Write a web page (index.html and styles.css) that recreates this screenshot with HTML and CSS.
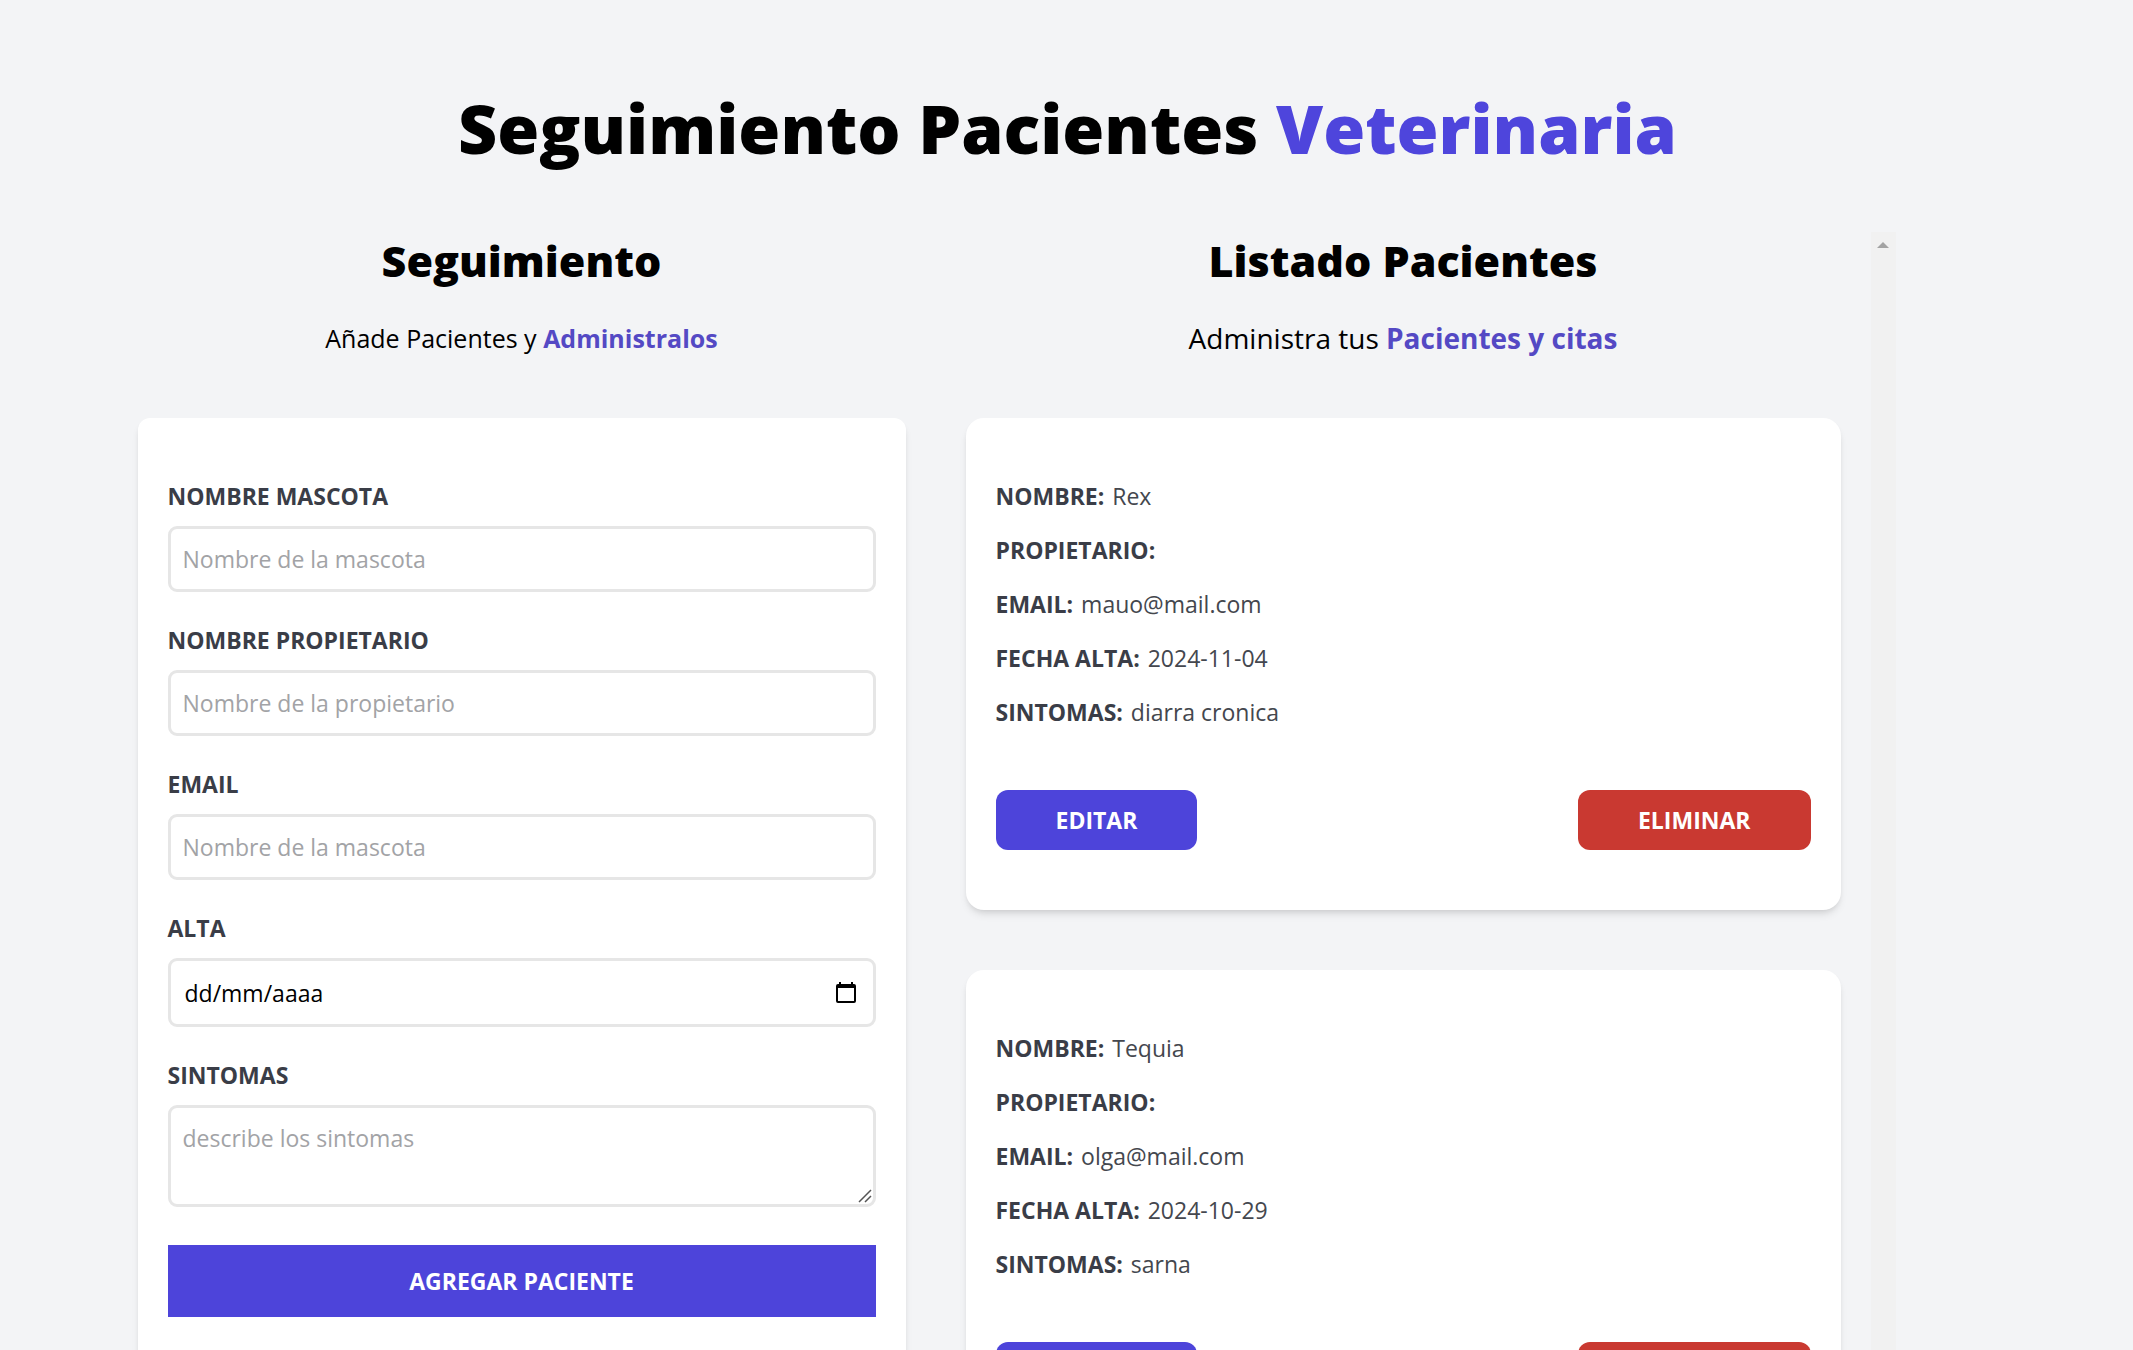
FILE: index.html
```html
<!DOCTYPE html>
<html lang="es">
<head>
  <meta charset="utf-8">
  <meta name="viewport" content="width=device-width, initial-scale=1">
  <title>Seguimiento Pacientes Veterinaria</title>
  <link rel="stylesheet" href="styles.css">
</head>
<body>
  <div class="container">
    <header>
      <h1 class="title">Seguimiento Pacientes <span class="accent">Veterinaria</span></h1>
    </header>
    <main class="columns">
      <section class="form-column">
        <h2 class="heading">Seguimiento</h2>
        <p class="intro">Añade Pacientes y <strong class="intro-accent">Administralos</strong></p>
        <form class="form">
          <div class="field">
            <label class="label" for="mascota">Nombre Mascota</label>
            <input class="control" id="mascota" type="text" placeholder="Nombre de la mascota">
          </div>
          <div class="field">
            <label class="label" for="propietario">Nombre Propietario</label>
            <input class="control" id="propietario" type="text" placeholder="Nombre de la propietario">
          </div>
          <div class="field">
            <label class="label" for="email">Email</label>
            <input class="control" id="email" type="email" placeholder="Nombre de la mascota">
          </div>
          <div class="field">
            <label class="label" for="alta">Alta</label>
            <div class="control date">
              <input class="date-input" id="alta" type="text" inputmode="numeric" placeholder="dd/mm/aaaa">
              <button class="date-button" type="button" aria-label="Abrir calendario">
                <svg class="date-icon" viewBox="0 0 20 22" aria-hidden="true"><path fill-rule="evenodd" d="M3 0h2v2h10V0h2v2h1a2 2 0 0 1 2 2v15a2 2 0 0 1-2 2H2a2 2 0 0 1-2-2V4a2 2 0 0 1 2-2h1zM2 6v13h16V6z"/></svg>
              </button>
            </div>
          </div>
          <div class="field field-last">
            <label class="label" for="sintomas">Sintomas</label>
            <textarea class="control area" id="sintomas" rows="2" placeholder="describe los sintomas"></textarea>
          </div>
          <button class="submit" type="submit">Agregar Paciente</button>
        </form>
      </section>
      <section class="list-column">
        <div class="list">
          <h2 class="heading">Listado Pacientes</h2>
          <p class="intro intro-large">Administra tus <strong class="intro-accent">Pacientes y citas</strong></p>
          <article class="card">
            <p class="row"><b class="key">Nombre:</b> Rex</p>
            <p class="row"><b class="key">Propietario:</b></p>
            <p class="row"><b class="key">Email:</b> mauo@mail.com</p>
            <p class="row"><b class="key">Fecha Alta:</b> 2024-11-04</p>
            <p class="row"><b class="key">Sintomas:</b> diarra cronica</p>
            <div class="actions">
              <button class="action" type="button">Editar</button>
              <button class="action action-delete" type="button">Eliminar</button>
            </div>
          </article>
          <article class="card">
            <p class="row"><b class="key">Nombre:</b> Tequia</p>
            <p class="row"><b class="key">Propietario:</b></p>
            <p class="row"><b class="key">Email:</b> olga@mail.com</p>
            <p class="row"><b class="key">Fecha Alta:</b> 2024-10-29</p>
            <p class="row"><b class="key">Sintomas:</b> sarna</p>
            <div class="actions">
              <button class="action" type="button">Editar</button>
              <button class="action action-delete" type="button">Eliminar</button>
            </div>
          </article>
        </div>
        <div class="track" aria-hidden="true"><span class="track-arrow"></span></div>
      </section>
    </main>
  </div>
</body>
</html>
```
FILE: styles.css
```css
* {
  box-sizing: border-box;
}

html {
  overflow-x: hidden;
  scrollbar-width: none;
}

body {
  margin: 0;
  background: #f3f4f6;
  color: #000;
  font-family: "Open Sans", "Noto Sans", sans-serif;
  font-size: 23px;
  line-height: 36px;
}

h1,
h2,
p {
  margin: 0;
}

input,
textarea,
button {
  font: inherit;
  color: inherit;
}

.container {
  max-width: 1922px;
  margin: 0 auto;
  padding: 92px 0 0 2px;
}

.title {
  font-size: 68px;
  line-height: 72px;
  font-weight: 800;
  text-align: center;
}

.accent {
  color: #4e45dc;
}

.columns {
  display: flex;
  align-items: flex-start;
  margin-top: 68px;
}

.form-column {
  width: 40%;
  margin: 0 30px;
}

.list-column {
  display: flex;
  width: 50%;
}

.list {
  flex: 1;
  padding: 0 30px;
}

.heading {
  font-size: 43px;
  line-height: 58px;
  font-weight: 800;
  text-align: center;
}

.intro {
  margin: 27px 0 59px;
  font-size: 25px;
  line-height: 42px;
  text-align: center;
}

.intro-large {
  font-size: 28px;
}

.intro-accent {
  color: #5449c4;
  font-weight: 700;
}

.form,
.card {
  margin-bottom: 60px;
  padding: 60px 30px;
  background: #fff;
  box-shadow: 0 6px 9px -2px rgba(0, 0, 0, 0.1), 0 3px 6px -3px rgba(0, 0, 0, 0.12);
}

.form {
  border-radius: 12px;
}

.card {
  border-radius: 18px;
  color: #44474e;
}

.field {
  margin-bottom: 30px;
}

.field-last {
  margin-bottom: 38px;
}

.label,
.key {
  color: #3a3d47;
  font-weight: 700;
  text-transform: uppercase;
}

.label {
  display: block;
  margin-bottom: 12px;
}

.key {
  margin-right: 2px;
}

.control {
  display: block;
  width: 100%;
  padding: 12px;
  border: 3px solid #e6e6e6;
  border-radius: 9px;
  background: #fff;
}

.control::placeholder {
  color: #a2a3a6;
  opacity: 1;
}

.date {
  display: flex;
  align-items: center;
  justify-content: space-between;
}

.date-input {
  flex: 1;
  height: 39px;
  padding: 0 2px;
  border: 0;
  background: none;
}

.date-input::placeholder {
  color: #000;
  opacity: 1;
}

.date-button {
  display: flex;
  padding: 0 5px;
  border: 0;
  background: none;
}

.date-icon {
  width: 20px;
  height: 22px;
}

.area {
  height: 102px;
}

.area::-webkit-resizer {
  background: url("data:image/svg+xml,%3Csvg xmlns='http://www.w3.org/2000/svg' width='15' height='15'%3E%3Cpath d='M1 13L13 1M7 13L13 7' stroke='%23555' stroke-width='1.5'/%3E%3C/svg%3E") no-repeat;
}

.submit,
.action {
  border: 0;
  background: #4d44da;
  color: #fff;
  font-weight: 700;
  text-transform: uppercase;
}

.submit {
  display: block;
  width: 100%;
  padding: 18px;
}

.actions {
  display: flex;
  justify-content: space-between;
  margin-top: 60px;
}

.row + .row {
  margin-top: 18px;
}

.action {
  padding: 12px 60px;
  border-radius: 12px;
}

.action-delete {
  background: #c93931;
}

.track {
  display: flex;
  justify-content: center;
  width: 25px;
  padding-top: 10px;
  background: #f1f1f1;
}

.track-arrow {
  width: 0;
  height: 0;
  border: 6px solid transparent;
  border-top-width: 0;
  border-bottom-color: #a3a3a3;
}
```
